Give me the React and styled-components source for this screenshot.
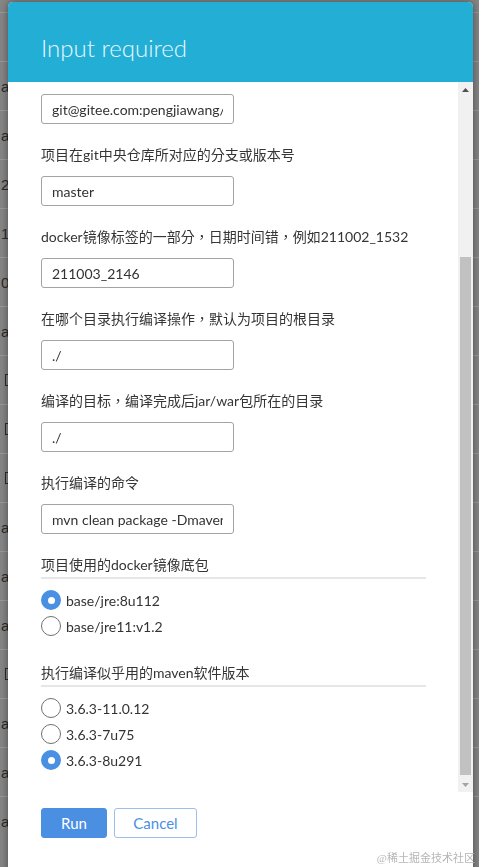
import React from 'react';
import styled, { createGlobalStyle } from 'styled-components';

const GlobalStyle = createGlobalStyle`
  html, body {
    margin: 0;
    padding: 0;
    height: 100%;
    overflow: hidden;
  }
  body {
    font-family: Lato, "Noto Sans CJK TC", sans-serif;
    background: #868686;
    text-spacing-trim: space-all;
  }
`;

// page behind the dialog, dimmed by the overlay
const Backdrop = styled.div`
  position: fixed;
  inset: 0;
  background: #868686;
  padding-top: 12px;
`;

const BgRow = styled.div`
  height: 48px;
  border-top: 1px solid #9b9b9b;
  display: flex;
  align-items: center;
  padding-left: 1px;
  font: 15px "Liberation Sans", Arial, sans-serif;
  color: #2b2b2b;
`;

const BgBox = styled.span`
  display: inline-block;
  width: 10px;
  height: 12px;
  margin-left: 4px;
  border: 1px solid #2b2b2b;
  box-sizing: border-box;
`;

const Modal = styled.div`
  position: absolute;
  top: 2px;
  left: 8px;
  width: 465px;
  height: 900px;
  background: #fff;
  border-radius: 5px 5px 0 0;
  box-shadow: 0 0 8px rgba(0, 0, 0, 0.45);
  display: flex;
  flex-direction: column;
  overflow: hidden;
`;

const Header = styled.div`
  height: 80px;
  background: #23aed6;
  display: flex;
  align-items: center;
  padding: 10px 0 0 33px;
  box-sizing: border-box;
`;

const Title = styled.h1`
  margin: 0;
  font-family: Lato, sans-serif;
  font-weight: 300;
  font-size: 24px;
  color: #e8f8fc;
`;

const Body = styled.div`
  height: 710px;
  display: flex;
`;

const Content = styled.div`
  flex: 1;
  overflow: hidden;
  padding: 12px 32px 0 33px;
`;

const Field = styled.div`
  margin-bottom: 21px;
`;

const Label = styled.div`
  font-size: 14px;
  line-height: 20px;
  color: #353535;
  margin-bottom: 11px;
  white-space: nowrap;
`;

const TextInput = styled.input`
  display: block;
  width: 193px;
  height: 30px;
  box-sizing: border-box;
  border: 1px solid #a3a3a3;
  border-radius: 3px;
  padding: 0 10px;
  font-family: Lato, "Noto Sans CJK TC", sans-serif;
  font-size: 14px;
  color: #333;
  background: #fff;
  outline: none;
`;

const Section = styled.div`
  margin-bottom: 27px;
`;

const SectionTitle = styled.div`
  font-size: 14px;
  line-height: 20px;
  color: #353535;
  padding-bottom: 2px;
  border-bottom: 2px solid #e6e6e6;
  margin-bottom: 11px;
`;

const RadioList = styled.div`
  display: flex;
  flex-direction: column;
  gap: 6px;
`;

const RadioRow = styled.label`
  display: flex;
  align-items: center;
  gap: 5px;
  height: 20px;
  font-size: 14px;
  color: #333;
`;

const RadioDot = styled.span`
  width: 20px;
  height: 20px;
  border-radius: 50%;
  box-sizing: border-box;
  flex-shrink: 0;
  background: ${(p) => (p.$checked ? '#4a90e2' : '#fff')};
  border: ${(p) => (p.$checked ? 'none' : '1px solid #6f6f6f')};
  display: flex;
  align-items: center;
  justify-content: center;

  &::after {
    content: '';
    width: 7px;
    height: 7px;
    border-radius: 50%;
    background: #fff;
    display: ${(p) => (p.$checked ? 'block' : 'none')};
  }
`;

const ScrollBar = styled.div`
  width: 15px;
  background: #f1f1f1;
  display: flex;
  flex-direction: column;
`;

const ScrollArrow = styled.div`
  height: 15px;
  display: flex;
  align-items: center;
  justify-content: center;
`;

const ScrollTrack = styled.div`
  flex: 1;
  display: flex;
  flex-direction: column;
  justify-content: flex-end;
`;

const ScrollThumb = styled.div`
  height: ${(p) => p.$size}px;
  margin: 0 2px 2px;
  background: #c1c1c1;
`;

const Footer = styled.div`
  display: flex;
  gap: 7px;
  padding: 16px 0 0 33px;
`;

const Button = styled.button`
  height: 30px;
  width: ${(p) => p.$w}px;
  box-sizing: border-box;
  border-radius: 3px;
  font-family: Lato, sans-serif;
  font-size: 15px;
  cursor: pointer;
  background: ${(p) => (p.$primary ? '#4a8fe2' : '#fff')};
  color: ${(p) => (p.$primary ? '#fff' : '#4a8fe2')};
  border: 1px solid ${(p) => (p.$primary ? '#4a8fe2' : '#9cc0ec')};
`;

const Watermark = styled.div`
  position: absolute;
  right: 4px;
  bottom: 2px;
  font-family: "Liberation Serif", "Noto Sans CJK SC", serif;
  font-size: 11px;
  color: #b5b5b5;
`;

const bgRows = ['', 'a', 'a', '2', '1', '0', 'a', '[', '[', '[', 'a', 'a', 'a', '[', 'a', 'a', 'a'];

const fields = [
  { label: null, value: 'git@gitee.com:pengjiawang/' },
  { label: '项目在git中央仓库所对应的分支或版本号', value: 'master' },
  { label: 'docker镜像标签的一部分，日期时间错，例如211002_1532', value: '211003_2146' },
  { label: '在哪个目录执行编译操作，默认为项目的根目录', value: './' },
  { label: '编译的目标，编译完成后jar/war包所在的目录', value: './' },
  { label: '执行编译的命令', value: 'mvn clean package -Dmaven.test.skip=true' },
];

const choices = [
  {
    title: '项目使用的docker镜像底包',
    options: ['base/jre:8u112', 'base/jre11:v1.2'],
    selected: 0,
  },
  {
    title: '执行编译似乎用的maven软件版本',
    options: ['3.6.3-11.0.12', '3.6.3-7u75', '3.6.3-8u291'],
    selected: 2,
  },
];

const Arrow = ({ down }) => (
  <svg width="7" height="4" viewBox="0 0 7 4">
    <path d={down ? 'M0 0h7L3.5 4z' : 'M0 4h7L3.5 0z'} fill={down ? '#a3a3a3' : '#505050'} />
  </svg>
);

export default function App() {
  return (
    <>
      <GlobalStyle />
      <Backdrop>
        {bgRows.map((t, i) => (
          <BgRow key={i}>{t === '[' ? <BgBox /> : t}</BgRow>
        ))}
      </Backdrop>

      <Modal>
        <Header>
          <Title>Input required</Title>
        </Header>

        <Body>
          <Content>
            {fields.map((f, i) => (
              <Field key={i}>
                {f.label && <Label>{f.label}</Label>}
                <TextInput defaultValue={f.value} readOnly />
              </Field>
            ))}

            {choices.map((c, i) => (
              <Section key={i}>
                <SectionTitle>{c.title}</SectionTitle>
                <RadioList>
                  {c.options.map((o, j) => (
                    <RadioRow key={o}>
                      <RadioDot $checked={j === c.selected} />
                      {o}
                    </RadioRow>
                  ))}
                </RadioList>
              </Section>
            ))}
          </Content>

          <ScrollBar>
            <ScrollArrow>
              <Arrow />
            </ScrollArrow>
            <ScrollTrack>
              <ScrollThumb $size={518} />
            </ScrollTrack>
            <ScrollArrow>
              <Arrow down />
            </ScrollArrow>
          </ScrollBar>
        </Body>

        <Footer>
          <Button $primary $w={66}>Run</Button>
          <Button $w={83}>Cancel</Button>
        </Footer>
      </Modal>

      <Watermark>@稀土掘金技术社区</Watermark>
    </>
  );
}
